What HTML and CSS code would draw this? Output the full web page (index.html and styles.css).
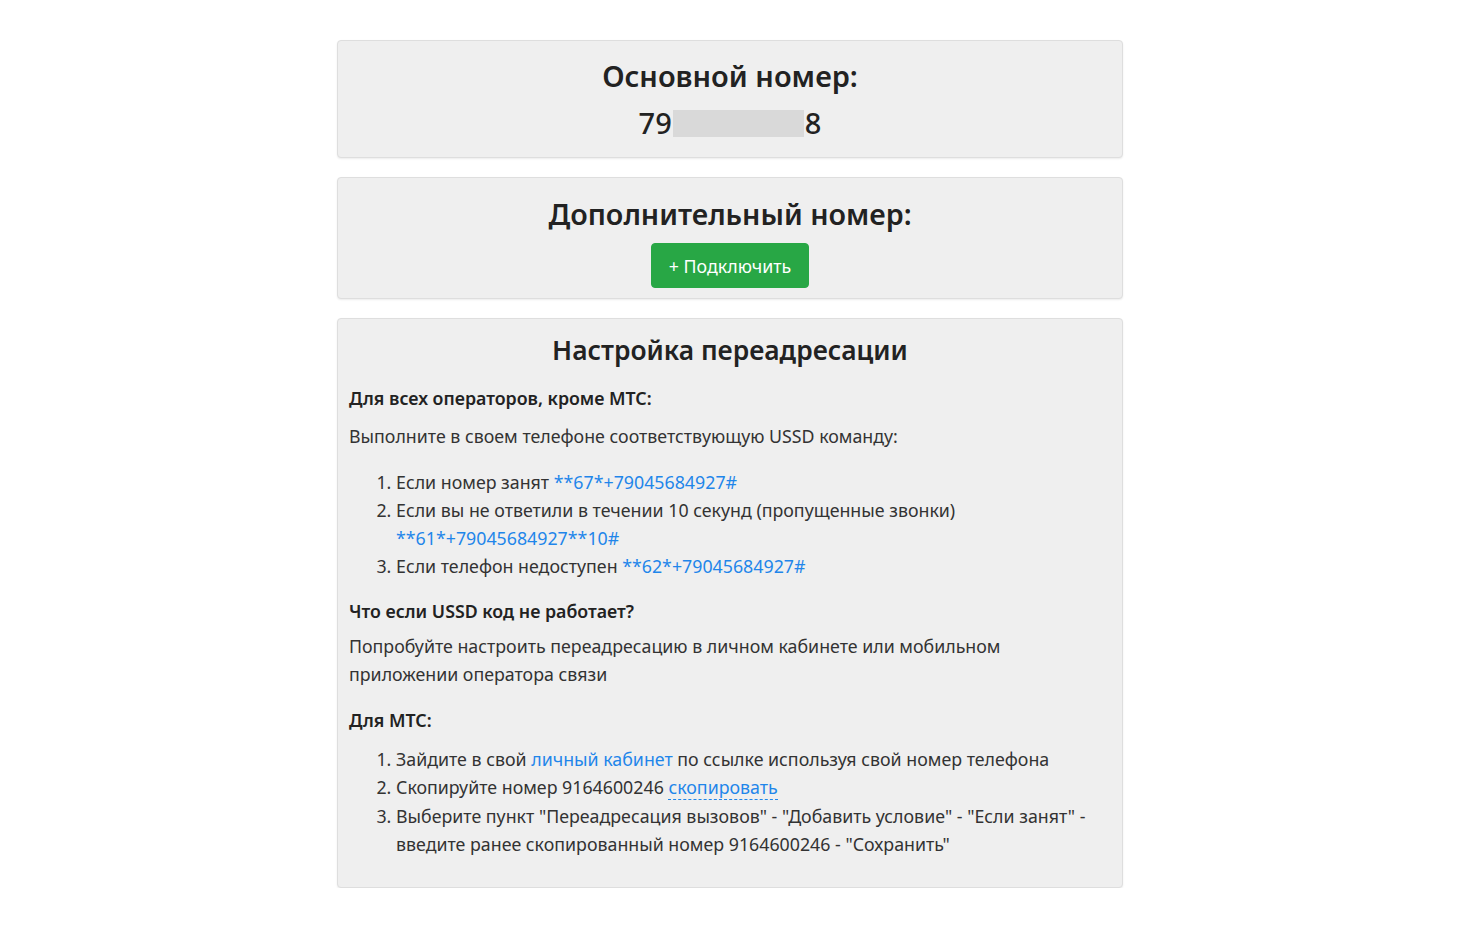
FILE: index.html
```html
<!DOCTYPE html>
<html lang="ru">
<head>
<meta charset="utf-8">
<title>Переадресация</title>
<link rel="stylesheet" href="styles.css">
</head>
<body>
<div class="wrap">
  <section class="card card-main">
    <h2 class="title">Основной номер:</h2>
    <div class="number">79<span class="redact"></span>8</div>
  </section>
  <section class="card card-extra">
    <h2 class="title title-md">Дополнительный номер:</h2>
    <button class="btn-green">+ Подключить</button>
  </section>
  <section class="card card-info">
    <h2 class="title title-sm">Настройка переадресации</h2>
    <div class="sub sub-first">Для всех операторов, кроме МТС:</div>
    <p class="para p1">Выполните в своем телефоне соответствующую USSD команду:</p>
    <ol class="list l1">
      <li>Если номер занят <a href="#" class="lnk">**67*+79045684927#</a></li>
      <li>Если вы не ответили в течении 10 секунд (пропущенные звонки) <a href="#" class="lnk">**61*+79045684927**10#</a></li>
      <li>Если телефон недоступен <a href="#" class="lnk">**62*+79045684927#</a></li>
    </ol>
    <div class="sub sub-q">Что если USSD код не работает?</div>
    <p class="para p2">Попробуйте настроить переадресацию в личном кабинете или мобильном приложении оператора связи</p>
    <div class="sub sub-mts">Для МТС:</div>
    <ol class="list l2">
      <li>Зайдите в свой <a href="#" class="lnk">личный кабинет</a> по ссылке используя свой номер телефона</li>
      <li>Скопируйте номер 9164600246 <a href="#" class="lnk copy">скопировать</a></li>
      <li>Выберите пункт "Переадресация вызовов" - "Добавить условие" - "Если занят" - введите ранее скопированный номер 9164600246 - "Сохранить"</li>
    </ol>
  </section>
</div>
</body>
</html>
```
FILE: styles.css
```css
html, body {
  margin: 0;
  padding: 0;
  background: #ffffff;
}
body {
  font-family: "Noto Sans", "Open Sans", "DejaVu Sans", sans-serif;
  color: #212529;
  font-size: 17.8px;
  line-height: 28.3px;
}
.wrap {
  width: 786px;
  margin: 40px 0 0 337px;
  display: flex;
  flex-direction: column;
  gap: 19px;
}
.card {
  background: #efefef;
  border: 1px solid #dedede;
  border-radius: 4px;
  box-shadow: 0 1px 2px rgba(0,0,0,0.08);
  padding: 0 11px;
  box-sizing: border-box;
}
.title {
  margin: 0;
  text-align: center;
  font-size: 29px;
  line-height: 36px;
  font-weight: 600;
  color: #222;
}
.title-md { font-size: 28.7px; }
.title-sm { font-size: 26.4px; }
.card-main {
  padding-top: 17px;
  height: 118px;
}
.number {
  margin-top: 11px;
  text-align: center;
  font-size: 29px;
  line-height: 36px;
  font-weight: 500;
  color: #222;
  display: flex;
  justify-content: center;
  align-items: center;
}
.redact {
  display: inline-block;
  width: 131px;
  height: 27px;
  background: #d9d9d9;
  margin: 0 1px;
}
.card-extra {
  padding-top: 18px;
  display: flex;
  flex-direction: column;
  align-items: center;
  height: 122px;
}
.btn-green {
  margin-top: 11px;
  width: 158px;
  height: 45px;
  background: #28a745;
  color: #fff;
  border: 1px solid #28a745;
  border-radius: 4px;
  font-family: inherit;
  font-size: 17.8px;
  padding: 0;
}
.card-info {
  padding-top: 13px;
  padding-bottom: 29px;
}
.sub {
  font-weight: 600;
  color: #222;
}
.sub-first { margin-top: 16px; }
.para { margin: 10px 0 0; color: #333; }
.p1 { margin-top: 10px; }
.list {
  margin: 17px 0 0;
  padding-left: 47px;
  color: #333;
}
.sub-q { margin-top: 16px; }
.p2 { margin-top: 7px; }
.sub-mts { margin-top: 17px; }
.l2 { margin-top: 11px; }
.lnk {
  color: #1f86ea;
  text-decoration: none;
}
.copy {
  border-bottom: 1px dashed #1f86ea;
}
```
